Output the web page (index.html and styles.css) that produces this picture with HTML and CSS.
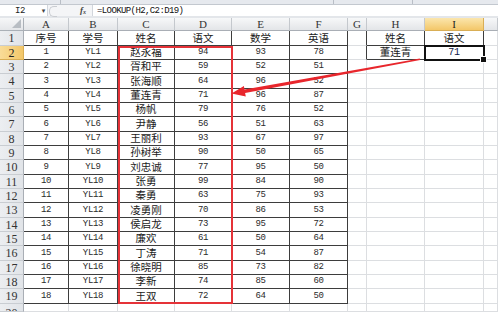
FILE: index.html
```html
<!DOCTYPE html>
<html lang="zh">
<head>
<meta charset="utf-8">
<title>LOOKUP</title>
<link rel="stylesheet" href="styles.css">
</head>
<body>
<div class="app">
  <div class="ribbon-edge"><span class="rdiv d1"></span><span class="rdiv d2"></span><span class="rdiv d3"></span></div>
  <div class="formula-bar">
    <div class="namebox"><span class="ref">I2</span><span class="dd">▾</span></div>
    <div class="grip"></div>
    <div class="fxzone"><span class="fx">f<sub>x</sub></span></div>
    <div class="formula">=LOOKUP(H2,C2:D19)</div>
  </div>
  <div class="gap"></div>
  <div class="sheet">
    <div class="corner"><span class="tri"></span></div>
    <div class="h">A</div><div class="h">B</div><div class="h">C</div><div class="h">D</div><div class="h">E</div><div class="h">F</div><div class="h">G</div><div class="h">H</div><div class="h sel">I</div><div class="h"></div>

    <div class="r">1</div><div class="c t k">序号</div><div class="c t k">学号</div><div class="c t k">姓名</div><div class="c t k">语文</div><div class="c t k">数学</div><div class="c t k">英语</div><div class="c tr"></div><div class="c t k">姓名</div><div class="c t k">语文</div><div class="c"></div>
    <div class="r sel">2</div><div class="c t n">1</div><div class="c t n">YL1</div><div class="c t k">赵永福</div><div class="c t n">94</div><div class="c t n">93</div><div class="c t n">78</div><div class="c tr"></div><div class="c t k">董连青</div><div class="c t n act big">71</div><div class="c"></div>
    <div class="r">3</div><div class="c t n">2</div><div class="c t n">YL2</div><div class="c t k">胥和平</div><div class="c t n">59</div><div class="c t n">52</div><div class="c t n">51</div><div class="c"></div><div class="c"></div><div class="c"></div><div class="c"></div>
    <div class="r">4</div><div class="c t n">3</div><div class="c t n">YL3</div><div class="c t k">张海顺</div><div class="c t n">64</div><div class="c t n">96</div><div class="c t n">52</div><div class="c"></div><div class="c"></div><div class="c"></div><div class="c"></div>
    <div class="r">5</div><div class="c t n">4</div><div class="c t n">YL4</div><div class="c t k">董连青</div><div class="c t n">71</div><div class="c t n">96</div><div class="c t n">87</div><div class="c"></div><div class="c"></div><div class="c"></div><div class="c"></div>
    <div class="r">6</div><div class="c t n">5</div><div class="c t n">YL5</div><div class="c t k">杨帆</div><div class="c t n">79</div><div class="c t n">76</div><div class="c t n">52</div><div class="c"></div><div class="c"></div><div class="c"></div><div class="c"></div>
    <div class="r">7</div><div class="c t n">6</div><div class="c t n">YL6</div><div class="c t k">尹静</div><div class="c t n">56</div><div class="c t n">51</div><div class="c t n">63</div><div class="c"></div><div class="c"></div><div class="c"></div><div class="c"></div>
    <div class="r">8</div><div class="c t n">7</div><div class="c t n">YL7</div><div class="c t k">王丽利</div><div class="c t n">93</div><div class="c t n">67</div><div class="c t n">97</div><div class="c"></div><div class="c"></div><div class="c"></div><div class="c"></div>
    <div class="r">9</div><div class="c t n">8</div><div class="c t n">YL8</div><div class="c t k">孙树举</div><div class="c t n">90</div><div class="c t n">50</div><div class="c t n">65</div><div class="c"></div><div class="c"></div><div class="c"></div><div class="c"></div>
    <div class="r">10</div><div class="c t n">9</div><div class="c t n">YL9</div><div class="c t k">刘忠诚</div><div class="c t n">77</div><div class="c t n">95</div><div class="c t n">50</div><div class="c"></div><div class="c"></div><div class="c"></div><div class="c"></div>
    <div class="r">11</div><div class="c t n">10</div><div class="c t n">YL10</div><div class="c t k">张勇</div><div class="c t n">99</div><div class="c t n">84</div><div class="c t n">90</div><div class="c"></div><div class="c"></div><div class="c"></div><div class="c"></div>
    <div class="r">12</div><div class="c t n">11</div><div class="c t n">YL11</div><div class="c t k">秦勇</div><div class="c t n">63</div><div class="c t n">75</div><div class="c t n">93</div><div class="c"></div><div class="c"></div><div class="c"></div><div class="c"></div>
    <div class="r">13</div><div class="c t n">12</div><div class="c t n">YL12</div><div class="c t k">凌勇刚</div><div class="c t n">70</div><div class="c t n">86</div><div class="c t n">53</div><div class="c"></div><div class="c"></div><div class="c"></div><div class="c"></div>
    <div class="r">14</div><div class="c t n">13</div><div class="c t n">YL13</div><div class="c t k">侯启龙</div><div class="c t n">73</div><div class="c t n">95</div><div class="c t n">72</div><div class="c"></div><div class="c"></div><div class="c"></div><div class="c"></div>
    <div class="r">15</div><div class="c t n">14</div><div class="c t n">YL14</div><div class="c t k">廉欢</div><div class="c t n">61</div><div class="c t n">50</div><div class="c t n">64</div><div class="c"></div><div class="c"></div><div class="c"></div><div class="c"></div>
    <div class="r">16</div><div class="c t n">15</div><div class="c t n">YL15</div><div class="c t k">丁涛</div><div class="c t n">71</div><div class="c t n">54</div><div class="c t n">87</div><div class="c"></div><div class="c"></div><div class="c"></div><div class="c"></div>
    <div class="r">17</div><div class="c t n">16</div><div class="c t n">YL16</div><div class="c t k">徐晓明</div><div class="c t n">85</div><div class="c t n">73</div><div class="c t n">82</div><div class="c"></div><div class="c"></div><div class="c"></div><div class="c"></div>
    <div class="r">18</div><div class="c t n">17</div><div class="c t n">YL17</div><div class="c t k">李新</div><div class="c t n">74</div><div class="c t n">85</div><div class="c t n">60</div><div class="c"></div><div class="c"></div><div class="c"></div><div class="c"></div>
    <div class="r">19</div><div class="c t n">18</div><div class="c t n">YL18</div><div class="c t k">王双</div><div class="c t n">72</div><div class="c t n">64</div><div class="c t n">50</div><div class="c"></div><div class="c"></div><div class="c"></div><div class="c"></div>
    <div class="r last"><span>20</span></div><div class="c"></div><div class="c"></div><div class="c"></div><div class="c"></div><div class="c"></div><div class="c"></div><div class="c"></div><div class="c"></div><div class="c"></div><div class="c"></div>

    <div class="redbox"></div>
  </div>
  <svg class="arrow" width="498" height="312" viewBox="0 0 498 312">
    <polygon points="231.5,93.6 243.9,86.1 244.5,89.5 419.8,58.6 420.2,59.9 245.1,92.9 245.8,96.4" fill="#e8262c"/>
  </svg>
</div>
</body>
</html>
```

FILE: styles.css
```css
* { box-sizing: border-box; }
html, body { margin: 0; padding: 0; background: #fff; }
.app {
  position: relative;
  width: 498px;
  height: 312px;
  overflow: hidden;
  background: #fff;
  font-family: "Noto Sans CJK SC", sans-serif;
}
.ribbon-edge {
  position: relative;
  height: 5px;
  background: #e6e9ee;
  border-bottom: 1px solid #c3c8cf;
}
.rdiv { position: absolute; top: 0; width: 1px; height: 4px; background: #b9bec6; }
.d1 { left: 60px; }
.d2 { left: 333px; }
.d3 { left: 412px; }
.formula-bar {
  height: 11px;
  display: flex;
  align-items: stretch;
  background: #f4f5f7;
}
.namebox {
  width: 48px;
  display: flex;
  align-items: center;
  background: #fff;
  border-right: 1px solid #d2d6dc;
  font-family: "Liberation Mono", monospace;
  font-size: 9px;
  color: #222;
}
.ref { margin-left: 15px; letter-spacing: -0.5px; }
.dd { margin-left: 17px; font-size: 7px; color: #444; font-family: "DejaVu Sans", sans-serif; }
.grip {
  width: 12px;
  position: relative;
  background: #f4f5f7;
}
.grip::before {
  content: "";
  position: absolute;
  left: 1px;
  top: 1px;
  width: 7px;
  height: 9px;
  border: 1px solid #c9ccd1;
  border-right: none;
  border-radius: 5px 0 0 5px;
}
.fxzone {
  width: 33px;
  display: flex;
  align-items: center;
  justify-content: flex-end;
  padding-right: 6px;
  border-right: 1px solid #d2d6dc;
}
.fx {
  font-family: "Liberation Serif", serif;
  font-style: italic;
  font-weight: bold;
  font-size: 9px;
  color: #444;
  line-height: 1;
}
.fx sub { font-size: 6px; vertical-align: -1px; }
.formula {
  flex: 1;
  background: #fff;
  padding-left: 4px;
  display: flex;
  align-items: center;
  font-family: "Liberation Mono", monospace;
  font-size: 9px;
  letter-spacing: -0.6px;
  color: #111;
}
.gap { height: 2px; background: #e3e6ea; }

.sheet {
  position: relative;
  display: grid;
  grid-template-columns: 24px 45px 49px 57px 57px 58px 58px 19px 58px 59px 14px;
  grid-template-rows: 13px 15px repeat(6, 14px 14px 15px) 8px;
}
.corner {
  position: relative;
  background: linear-gradient(#f6f7f8, #e4e6e9);
  border-right: 1px solid #aab0b7;
  border-bottom: 1px solid #aab0b7;
}
.tri {
  position: absolute;
  right: 2px;
  bottom: 2px;
  width: 0;
  height: 0;
  border-left: 9px solid transparent;
  border-bottom: 9px solid #b8bdc3;
}
.h {
  display: flex;
  align-items: center;
  justify-content: center;
  background: linear-gradient(#f7f8f9, #e3e5e8);
  border-right: 1px solid #c4c8cd;
  border-bottom: 1px solid #a9aeb5;
  font-family: "Liberation Serif", serif;
  font-size: 11px;
  color: #333;
  line-height: 1;
}
.r {
  display: flex;
  align-items: center;
  justify-content: center;
  background: linear-gradient(90deg, #eceef1, #e1e4e8);
  border-right: 1px solid #a9aeb5;
  border-bottom: 1px solid #c9cdd2;
  font-family: "Liberation Serif", serif;
  font-size: 12px;
  color: #333;
  line-height: 1;
  overflow: hidden;
}
.r.last { align-items: flex-start; padding-top: 3px; }
.h.sel { background: linear-gradient(#fbe6ad, #f3c769); border-color: #d9ae55; color: #222; }
.r.sel { background: linear-gradient(90deg, #f9dc98, #f3c769); border-color: #d9ae55; color: #222; }

.c {
  display: flex;
  align-items: center;
  justify-content: center;
  border-right: 1px solid #dcdee1;
  border-bottom: 1px solid #dcdee1;
  color: #1a1a1a;
  line-height: 1;
  background: #fff;
}
.c.t { border-color: #3d3d3d; }
.c.tr { border-right-color: #3d3d3d; }
.k { font-family: "Noto Sans CJK SC", sans-serif; font-size: 10.5px; }
.n { font-family: "Liberation Mono", monospace; font-size: 9px; letter-spacing: -0.3px; color: #2a2a2a; }
.big { font-size: 10px; color: #10204a; }
.act { position: relative; }
.act::after {
  content: "";
  position: absolute;
  left: -1px;
  top: -1px;
  right: -2px;
  bottom: -2px;
  border: 2px solid #111;
}
.act::before {
  content: "";
  position: absolute;
  right: -4px;
  bottom: -4px;
  width: 5px;
  height: 5px;
  background: #111;
  border: 1px solid #fff;
  z-index: 2;
}
.redbox {
  position: absolute;
  grid-column: 4 / 6;
  grid-row: 3 / 21;
  top: 0;
  left: 0;
  right: -1px;
  bottom: 0;
  border: 2px solid #e53238;
  pointer-events: none;
}
.arrow {
  position: absolute;
  left: 0;
  top: 0;
  pointer-events: none;
}
```
